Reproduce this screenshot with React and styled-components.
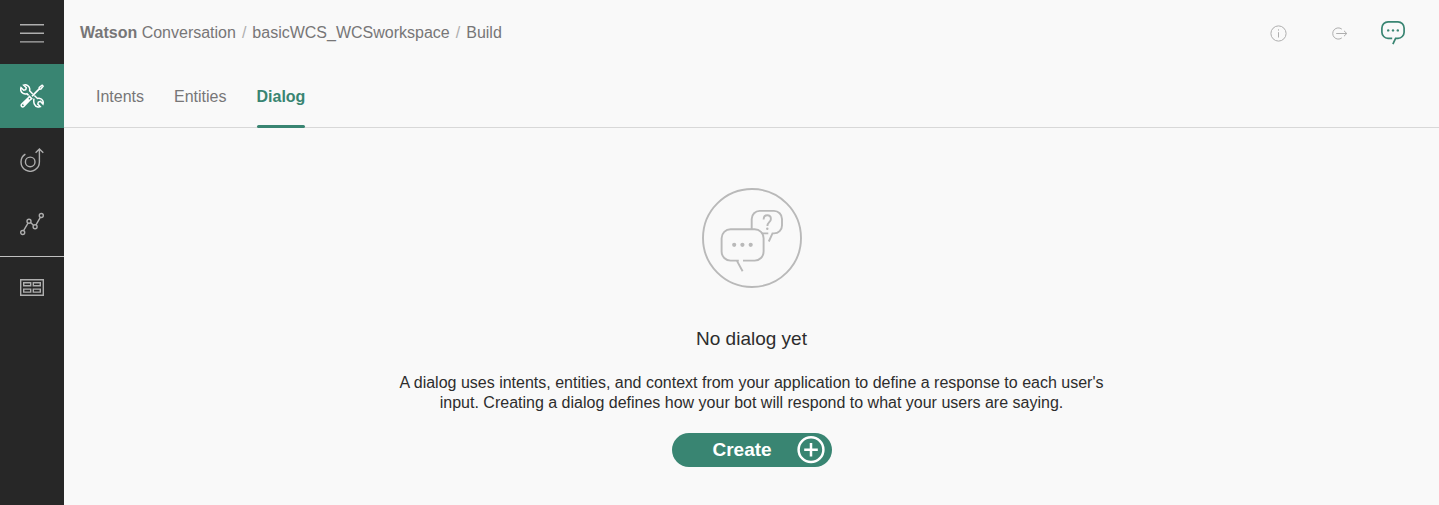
import React from "react";
import styled, { createGlobalStyle } from "styled-components";

const GlobalStyle = createGlobalStyle`
  * { box-sizing: border-box; }
  body {
    margin: 0;
    background: #f9f9f9;
    color: #2d2d2d;
    font-family: "Liberation Sans", Arial, sans-serif;
    font-size: 16px;
    line-height: 20px;
  }
`;

const Page = styled.div`
  display: flex;
  min-height: 100vh;
`;

const Sidebar = styled.nav`
  flex: none;
  display: flex;
  flex-direction: column;
  width: 64px;
  background: #272727;
`;

const menuItem = `
  display: flex;
  align-items: center;
  justify-content: center;
  height: 64px;
  padding: 0;
  border: 0;
`;

const MenuButton = styled.button`
  ${menuItem}
  background: transparent;
  color: #aeaeae;
  cursor: pointer;
`;

const MenuLink = styled.a`
  ${menuItem}
  background: ${(p) => (p.$active ? "#398572" : "transparent")};
  color: ${(p) => (p.$active ? "#ffffff" : "#aeaeae")};
`;

const MenuDivider = styled.hr`
  width: 100%;
  height: 1px;
  margin: 0 0 -1px;
  border: 0;
  background: #c0c0c0;
`;

const Main = styled.div`
  flex: 1;
  min-width: 0;
`;

const TopBar = styled.header`
  display: flex;
  align-items: center;
  justify-content: space-between;
  height: 64px;
  padding: 2px 34px 0 16px;
`;

const Breadcrumb = styled.nav`
  display: flex;
  gap: 6px;
  color: #777677;
`;

const Crumb = styled.a`
  color: inherit;
  text-decoration: none;
`;

const Slash = styled.span`
  color: #aeaeae;
`;

const Actions = styled.div`
  display: flex;
  align-items: center;
`;

const IconButton = styled.button`
  display: flex;
  margin-left: ${(p) => p.$gap || 0}px;
  padding: 0;
  border: 0;
  background: transparent;
  color: ${(p) => (p.$accent ? "#398572" : "#aeaeae")};
  cursor: pointer;
`;

const Tabs = styled.nav`
  display: flex;
  gap: 30px;
  height: 64px;
  padding: 0 32px;
  border-bottom: 1px solid #d8d8d8;
`;

const Tab = styled.a`
  height: 64px;
  padding-top: 23px;
  color: ${(p) => (p.$active ? "#398572" : "#777677")};
  font-weight: ${(p) => (p.$active ? "bold" : "normal")};
  text-decoration: none;

  &::after {
    content: "";
    display: ${(p) => (p.$active ? "block" : "none")};
    height: 3px;
    margin-top: 18px;
    border-radius: 2px;
    background: #398572;
  }
`;

const EmptyState = styled.main`
  display: flex;
  flex-direction: column;
  align-items: center;
  padding: 60px 16px 38px;
  text-align: center;
`;

const Title = styled.h1`
  margin: 39px 0 0;
  font-size: 19px;
  font-weight: normal;
  line-height: 24px;
`;

const Description = styled.p`
  max-width: 720px;
  margin: 22px 0 20px;
`;

const CreateButton = styled.button`
  display: flex;
  align-items: center;
  justify-content: space-between;
  width: 160px;
  height: 34px;
  padding: 0 7px 0 41px;
  border: 0;
  border-radius: 17px;
  background: #398572;
  color: #ffffff;
  font: bold 19px/24px "Liberation Sans", Arial, sans-serif;
  cursor: pointer;
`;

const Icon = ({ width = 24, height = 24, stroke = 1, children }) => (
  <svg
    width={width}
    height={height}
    viewBox={`0 0 ${width} ${height}`}
    fill="none"
    stroke="currentColor"
    strokeWidth={stroke}
    aria-hidden="true"
  >
    {children}
  </svg>
);

const HamburgerIcon = () => (
  <Icon stroke={1.4}>
    <path d="M0 4.7h24M0 13.2h24M0 21.9h24" />
  </Icon>
);

const ToolsIcon = () => (
  <Icon stroke={1.5}>
    <path d="M8.6 11.4 6.9 9.7C4.2 10.4 1.4 9.1.8 6.5.5 5.3.7 4.3 1 3.6l2.7 2.6 2-.5.6-2L3.6 1.1C6.6.1 9.6 2.1 9.8 5l-.2 1.7 3.1 3.2" />
    <path d="M14 14.7c-.8 4 .4 7.6 4 8.3.9.2 1.8 0 2.4-.3l-2.6-2.6.6-2.1 2.1-.6 2.5 2.6c.8-2.4-.6-4.9-2.9-5.5-1-.3-2-.2-2.6 0l-3.1-3" />
    <path d="m12 12.1 7-7 .3-1.7 2.8-2.2 1 1-2.2 2.8-1.8.3-6.9 7" />
    <path d="m9.4 12.4 2.3 2.3-1.5 1.1-6.4 6.6c-1.4 1.4-3.6-.7-2.2-2.1l6.7-6.4zM3.4 20.7l5.4-5.4" />
  </Icon>
);

const ImproveIcon = () => (
  <Icon stroke={1.4}>
    <circle cx="10.2" cy="13.9" r="4.8" />
    <path d="M5.4 6.2A9.2 9.2 0 1 0 19.4 13.9V1.1M15.6 4.7 19.4 1l3.9 3.7" />
  </Icon>
);

const TrendIcon = () => (
  <Icon stroke={1.4}>
    <circle cx="2.7" cy="20.5" r="2" />
    <circle cx="9" cy="9.2" r="2" />
    <circle cx="15.1" cy="14.7" r="2" />
    <circle cx="21.3" cy="3.5" r="2" />
    <path d="m3.6 18.7 4.4-7.6M10.5 10.5l3 2.8M16 12.9l4.3-7.6" />
  </Icon>
);

const TableIcon = () => (
  <Icon stroke={1.4}>
    <path d="M.7 3.7h22.6v15.6H.7zM3.7 6.8h7v3h-7zM13.3 6.8h7v3h-7zM3.7 13.1h7v3h-7zM13.3 13.1h7v3h-7z" />
  </Icon>
);

const InfoIcon = () => (
  <Icon width={17} height={17}>
    <circle cx="8.5" cy="8.5" r="7.6" />
    <path d="M8.5 7.2v5.3M8.5 4.3v1.3" />
  </Icon>
);

const ExitIcon = () => (
  <Icon width={17} height={17}>
    <path d="M10.8 4.1a5.6 5.6 0 1 0 0 8.8M5.2 8.5h10.5M13 5.8l2.8 2.7-2.8 2.7" />
  </Icon>
);

const ChatIcon = () => (
  <Icon height={26} stroke={1.7}>
    <path d="M11.2 18.3H7a6.2 6.2 0 0 1-6.1-6.1V8A6.2 6.2 0 0 1 7 1.9h10A6.2 6.2 0 0 1 23.1 8v4.2a6.2 6.2 0 0 1-6.1 6.1h-2.4l-2.7 5.9" />
    <g fill="currentColor" stroke="none">
      <circle cx="7.2" cy="10.4" r="1.2" />
      <circle cx="12" cy="10.4" r="1.2" />
      <circle cx="16.8" cy="10.4" r="1.2" />
    </g>
  </Icon>
);

const Illustration = styled.svg`
  display: block;
  color: #b9b9b9;
`;

const DialogIllustration = () => (
  <Illustration width="100" height="100" viewBox="0 0 100 100" fill="none" stroke="currentColor" strokeWidth="1.9" aria-hidden="true">
    <circle cx="50" cy="50" r="49" />
    <path d="M36.8 72.6h-8.2a9 9 0 0 1-9-9V50.3a9 9 0 0 1 9-9h24a9 9 0 0 1 9 9v13.3a9 9 0 0 1-9 9H41M34.8 72.6l5.8 10.6" />
    <path d="M49.7 41V30.9a8 8 0 0 1 8-8H72a8 8 0 0 1 8 8v6.5a8 8 0 0 1-8 8h-1.5l-3.7 8.1M60 45.4h6.3" />
    <path d="M61.6 31.6c0-2.7 1.6-4.3 3.7-4.3s3.6 1.5 3.6 3.6c0 3.2-3.5 3.3-3.5 7" />
    <g fill="currentColor" stroke="none">
      <circle cx="65.3" cy="40.7" r="1.2" />
      <circle cx="32.2" cy="56.8" r="2.1" />
      <circle cx="40.4" cy="56.8" r="2.1" />
      <circle cx="48.7" cy="56.8" r="2.1" />
    </g>
  </Illustration>
);

const AddIcon = () => (
  <Icon width={28} height={28} stroke={2.5}>
    <circle cx="14" cy="13.7" r="12.4" />
    <path d="M14 6.9v13.6M7.2 13.7h13.6" />
  </Icon>
);

export default function App() {
  return (
    <Page>
      <GlobalStyle />
      <Sidebar aria-label="Main">
        <MenuButton type="button" aria-label="Menu"><HamburgerIcon /></MenuButton>
        <MenuLink href="#build" aria-label="Build" $active><ToolsIcon /></MenuLink>
        <MenuLink href="#improve" aria-label="Improve"><ImproveIcon /></MenuLink>
        <MenuLink href="#analytics" aria-label="Analytics"><TrendIcon /></MenuLink>
        <MenuDivider />
        <MenuLink href="#workspaces" aria-label="Workspaces"><TableIcon /></MenuLink>
      </Sidebar>
      <Main>
        <TopBar>
          <Breadcrumb aria-label="Breadcrumb">
            <Crumb href="#home"><b>Watson</b> Conversation</Crumb>
            <Slash>/</Slash>
            <Crumb href="#workspace">basicWCS_WCSworkspace</Crumb>
            <Slash>/</Slash>
            <span>Build</span>
          </Breadcrumb>
          <Actions>
            <IconButton type="button" aria-label="Information"><InfoIcon /></IconButton>
            <IconButton type="button" aria-label="Log out" $gap={44}><ExitIcon /></IconButton>
            <IconButton type="button" aria-label="Try it out" $gap={33} $accent><ChatIcon /></IconButton>
          </Actions>
        </TopBar>
        <Tabs aria-label="Build sections">
          <Tab href="#intents">Intents</Tab>
          <Tab href="#entities">Entities</Tab>
          <Tab href="#dialog" $active aria-current="page">Dialog</Tab>
        </Tabs>
        <EmptyState>
          <DialogIllustration />
          <Title>No dialog yet</Title>
          <Description>
            A dialog uses intents, entities, and context from your application to define a response to each user's
            input. Creating a dialog defines how your bot will respond to what your users are saying.
          </Description>
          <CreateButton type="button">
            Create
            <AddIcon />
          </CreateButton>
        </EmptyState>
      </Main>
    </Page>
  );
}
